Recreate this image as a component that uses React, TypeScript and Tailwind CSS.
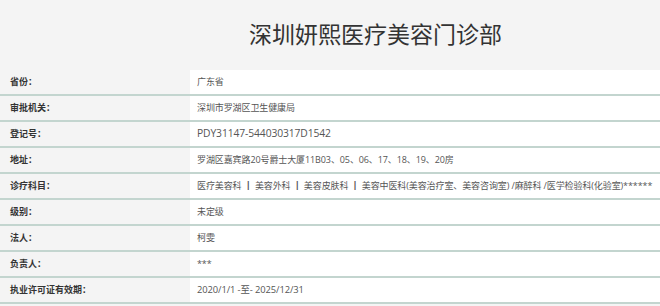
const rows: { label: string; value: string; size?: string }[] = [
  { label: "省份：", value: "广东省" },
  { label: "审批机关：", value: "深圳市罗湖区卫生健康局" },
  { label: "登记号：", value: "PDY31147-544030317D1542", size: "text-[10.3px]" },
  { label: "地址：", value: "罗湖区嘉宾路20号爵士大厦11B03、05、06、17、18、19、20房" },
  {
    label: "诊疗科目：",
    value:
      "医疗美容科 ┃ 美容外科 ┃ 美容皮肤科 ┃ 美容中医科(美容治疗室、美容咨询室) /麻醉科 /医学检验科(化验室)******",
  },
  { label: "级别：", value: "未定级" },
  { label: "法人：", value: "柯雯" },
  { label: "负责人：", value: "***" },
  { label: "执业许可证有效期：", value: "2020/1/1 -至- 2025/12/31", size: "text-[9.4px]" },
];

export default function App() {
  return (
    <div
      className="w-[660px] h-[306px] bg-[#f4f4f4] overflow-hidden"
      style={{ fontFamily: '"Open Sans", "Noto Sans CJK SC", sans-serif' }}
    >
      {/* Title */}
      <div className="h-[70px] flex items-center pl-[249px] pb-[2px]">
        <h1 className="text-[23px] leading-none text-[#333]">
          深圳妍熙医疗美容门诊部
        </h1>
      </div>

      {/* Info table */}
      <div className="flex flex-col">
        {rows.map((row) => (
          <div
            key={row.label}
            className="flex h-[26px] border-b-2 border-[#c3d5cf]"
          >
            <div className="w-[190px] shrink-0 flex items-center pl-[10px] text-[9px] font-bold text-[#333] bg-[#f4f4f4]">
              {row.label}
            </div>
            <div
              className={`flex-1 flex items-center pl-[7px] ${row.size ?? "text-[9px]"} text-[#555] bg-white whitespace-nowrap tracking-[-0.1px]`}
            >
              {row.value}
            </div>
          </div>
        ))}
      </div>
    </div>
  );
}
